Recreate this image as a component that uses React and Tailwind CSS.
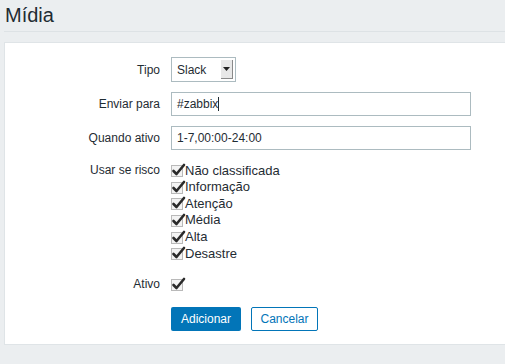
import React from 'react';

const Check = () => (
  <svg width="15" height="14" viewBox="0 0 15 14" className="shrink-0">
    <rect x="0.5" y="2.5" width="11" height="11" fill="#f3f3f3" stroke="#b9b9b9" />
    <path d="M2.5 8 L5.5 11 L13 2" fill="none" stroke="#2a2a2a" strokeWidth="2.6" strokeLinecap="round" strokeLinejoin="round" />
  </svg>
);

const App = () => {
  const levels = ['Não classificada', 'Informação', 'Atenção', 'Média', 'Alta', 'Desastre'];

  return (
    <div
      className="w-[505px] h-[364px] overflow-hidden bg-[#ebeef0] text-[#1f2c33] text-[12px]"
      style={{ fontFamily: '"Liberation Sans", Arial, sans-serif' }}
    >
      {/* Header */}
      <div className="pl-[4px]">
        <h1 className="h-[32px] pl-[1px] pt-[3px] text-[20px] leading-[24px] border-b border-[#dde2e5]">Mídia</h1>
      </div>

      {/* Form panel */}
      <div className="ml-[4px] mt-[10px] w-[510px] h-[303px] bg-white border border-[#dfe4e7] pt-[14px]">
        <div className="flex flex-col gap-[10px]">
          <div className="flex items-center">
            <div className="w-[155px] text-right">Tipo</div>
            <div className="ml-[11px] w-[65px] h-[25px] flex items-center border border-[#acbbc0] bg-white">
              <span className="pl-[5px] flex-1">Slack</span>
              <div className="w-[12px] h-[19px] mr-[2px] bg-[#e8e8e8] border-r border-b border-[#8a8a8a] flex items-center justify-center">
                <svg width="7" height="4" viewBox="0 0 7 4">
                  <path d="M0 0 H7 L3.5 4 Z" fill="#222" />
                </svg>
              </div>
            </div>
          </div>

          <div className="flex items-center">
            <div className="w-[155px] text-right">Enviar para</div>
            <div className="ml-[11px] w-[300px] h-[24px] flex items-center border border-[#acbbc0] px-[5px]">
              #zabbix<span className="w-[1px] h-[14px] bg-[#1f2c33]"></span>
            </div>
          </div>

          <div className="flex items-center">
            <div className="w-[155px] text-right">Quando ativo</div>
            <div className="ml-[11px] w-[300px] h-[24px] flex items-center border border-[#acbbc0] px-[5px]">
              1-7,00:00-24:00
            </div>
          </div>
        </div>

        <div className="flex mt-[12px]">
          <div className="w-[155px] text-right leading-[16.6px] pt-[0px]">Usar se risco</div>
          <div className="ml-[11px] flex flex-col">
            {levels.map((level, i) => (
              <label key={i} className="flex items-center h-[16.6px] text-[13px]">
                <Check />
                <span className="-ml-[1px]">{level}</span>
              </label>
            ))}
          </div>
        </div>

        <div className="flex items-center mt-[14px] h-[16px]">
          <div className="w-[155px] text-right">Ativo</div>
          <div className="ml-[11px] flex items-center">
            <Check />
          </div>
        </div>

        <div className="flex mt-[15px] ml-[166px] gap-[10px]">
          <button className="w-[70px] h-[24px] bg-[#0275b8] text-white text-[12px] rounded-[2px]">Adicionar</button>
          <button className="w-[67px] h-[24px] bg-white border border-[#0275b8] text-[#0275b8] text-[12px] rounded-[2px]">Cancelar</button>
        </div>
      </div>
    </div>
  );
};

export default App;
